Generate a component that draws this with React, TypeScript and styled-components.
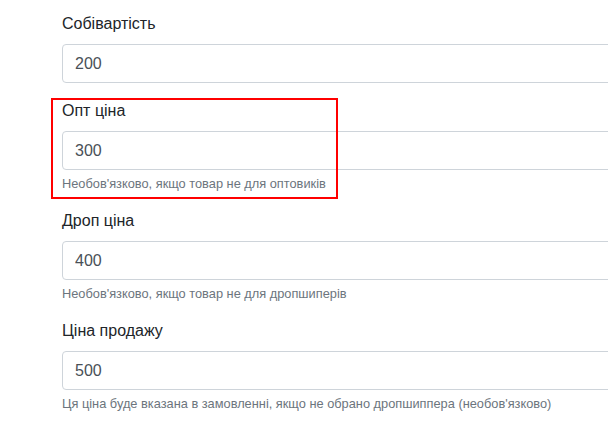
import styled, { createGlobalStyle } from "styled-components";

const GlobalStyle = createGlobalStyle`
  html, body {
    margin: 0;
    padding: 0;
    background: #fff;
    overflow: hidden;
  }
  body {
    font-family: "Liberation Sans", Arial, sans-serif;
    font-size: 16px;
    line-height: 1.5;
    color: #212529;
  }
`;

const Form = styled.form`
  padding: 12px 0 0 62px;
  width: 580px;
`;

const Group = styled.div<{ $highlight?: boolean }>`
  position: relative;
  margin-bottom: 16px;

  ${(p) =>
    p.$highlight &&
    `
    &::after {
      content: "";
      position: absolute;
      left: -11px;
      top: -1px;
      width: 283px;
      bottom: -6px;
      border: 2px solid #ff0000;
      pointer-events: none;
    }
  `}
`;

const Label = styled.label`
  display: block;
  margin-bottom: 8px;
  font-size: 16px;
  line-height: 24px;
  color: #212529;
`;

const Input = styled.input`
  display: block;
  box-sizing: border-box;
  width: 100%;
  height: 39px;
  padding: 6px 12px;
  font-family: inherit;
  font-size: 16px;
  line-height: 24px;
  color: #495057;
  background: #fff;
  border: 1px solid #ced4da;
  border-radius: 4px;
  outline: none;
`;

const Help = styled.small`
  display: block;
  margin-top: 4px;
  font-size: 12.8px;
  line-height: 19.2px;
  color: #6c757d;
`;

const fields = [
  { label: "Собівартість", value: "200" },
  { label: "Опт ціна", value: "300", help: "Необов'язково, якщо товар не для оптовиків", highlight: true },
  { label: "Дроп ціна", value: "400", help: "Необов'язково, якщо товар не для дропшиперів" },
  {
    label: "Ціна продажу",
    value: "500",
    help: "Ця ціна буде вказана в замовленні, якщо не обрано дропшиппера (необов'язково)",
  },
];

export default function App() {
  return (
    <>
      <GlobalStyle />
      <Form onSubmit={(e) => e.preventDefault()}>
        {fields.map((f) => (
          <Group key={f.label} $highlight={f.highlight}>
            <Label>{f.label}</Label>
            <Input type="text" defaultValue={f.value} />
            {f.help && <Help>{f.help}</Help>}
          </Group>
        ))}
      </Form>
    </>
  );
}
